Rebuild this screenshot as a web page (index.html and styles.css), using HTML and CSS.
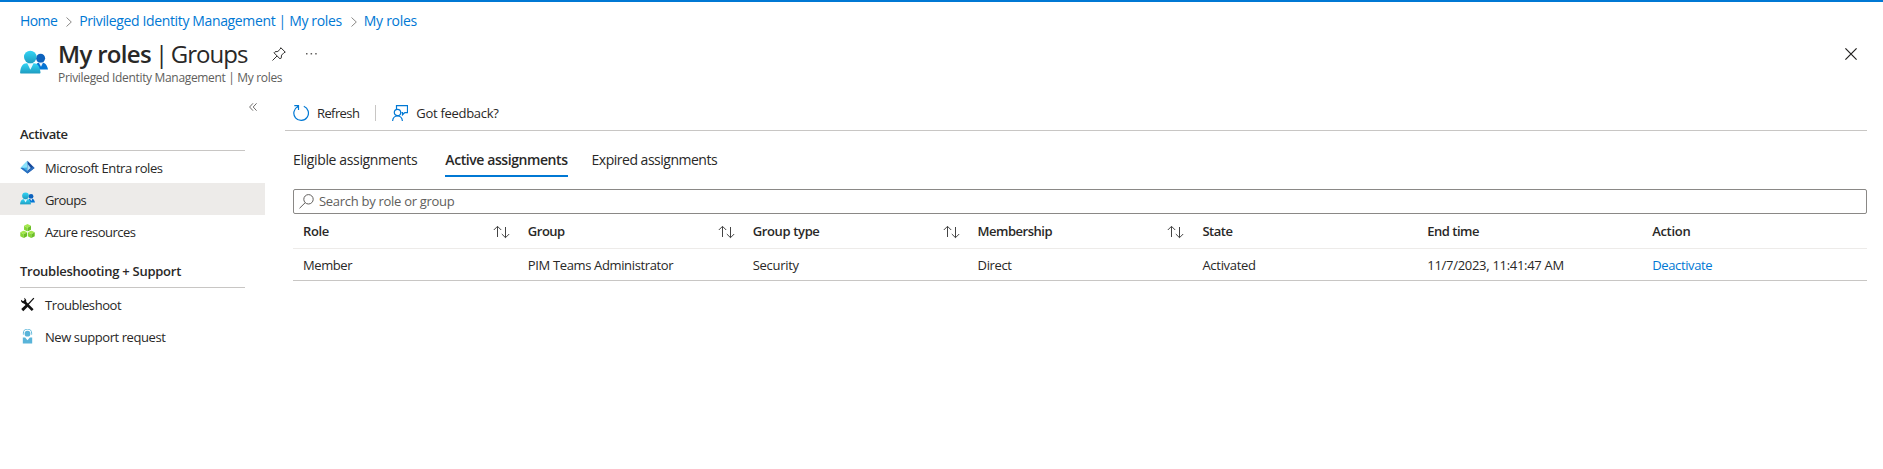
FILE: index.html
```html
<!DOCTYPE html>
<html lang="en">
<head>
<meta charset="utf-8">
<title>My roles | Groups</title>
<link rel="stylesheet" href="styles.css">
</head>
<body>
<svg class="defs" aria-hidden="true">
  <defs>
    <linearGradient id="cyan" x1="0" y1="0" x2="0" y2="1"><stop offset="0" stop-color="#32d4f5"/><stop offset="1" stop-color="#1e9cc0"/></linearGradient>
    <linearGradient id="blue" x1="0" y1="0" x2="0" y2="1"><stop offset="0" stop-color="#0a6fd0"/><stop offset="1" stop-color="#0078d7"/></linearGradient>
    <symbol id="people" viewBox="0 0 28 24">
      <circle cx="20.600" cy="8.200" r="4.500" fill="#0d62bd"/>
      <path d="M15 19.500V17c.6-2.600 2-4.300 4-4.300h3.500c2.700 0 4.600 2.600 5.500 6.800z" fill="url(#blue)"/>
      <path d="M18.800 12.700h4.200l-2 4z" fill="#fff" opacity=".9"/>
      <path d="M1.200 23.500C.4 23.500 0 23 .1 22.200.8 16.500 3 13.300 6.500 13.300h7.400c3.600 0 5.900 3.200 6.600 8.900.1.8-.3 1.300-1.100 1.300z" fill="url(#cyan)"/>
      <path d="M7.200 13.300h6.400l-3.200 6.500z" fill="#fff" opacity=".9"/>
      <circle cx="10.300" cy="7" r="6.300" fill="url(#cyan)"/>
    </symbol>
    <symbol id="sort" viewBox="0 0 18 14">
      <path d="M4.500 12V1.500M.8 5l3.700-3.700L8.200 5M12.500 2v10.700M8.800 9l3.700 3.700L16.200 9" fill="none" stroke="#444" stroke-width="1"/>
    </symbol>
    <symbol id="chev" viewBox="0 0 6 10"><path d="M.5.5 5.300 5 .5 9.500" fill="none" stroke="#8a8886"/></symbol>
    <symbol id="cube" viewBox="0 0 8 8">
      <path d="M4 0 7.700 1.900 4 3.900.3 1.900z" fill="#a4e84c"/><path d="M.3 1.900 4 3.900V8L.3 6.100z" fill="#86d633"/><path d="M7.700 1.900 4 3.900V8l3.700-1.900z" fill="#6bbd25"/>
    </symbol>
  </defs>
</svg>
<div class="page">
  <nav class="breadcrumb">
    <a class="t6">Home</a><svg class="chev"><use href="#chev"/></svg>
    <a>Privileged Identity Management | My roles</a><svg class="chev"><use href="#chev"/></svg>
    <a class="t3">My roles</a>
  </nav>
  <header class="head">
    <svg class="head-icon"><use href="#people"/></svg>
    <div class="titles">
      <div class="title-row">
        <h1><b>My roles</b><span class="pipe">|</span><span class="section">Groups</span></h1>
        <svg class="pin" viewBox="0 0 14 14"><path d="M8.800.7 13.300 5.200 12 5.700 9.600 8.100 9.200 11 8.200 12 2 5.800 3 4.800l2.900-.4L8.300 2zM5 9 .5 13.500" fill="none" stroke="#323130"/></svg>
        <svg class="dots" viewBox="0 0 11 2"><path d="M0 0h1.500v1.500H0zM4.600 0h1.500v1.500H4.600zM9.200 0h1.500v1.500H9.200z" fill="#605e5c"/></svg>
      </div>
      <div class="subtitle">Privileged Identity Management | My roles</div>
    </div>
    <svg class="close" viewBox="0 0 12 12"><path d="M.4.4l11.200 11.200M11.600.4.4 11.600" stroke="#201f1e" stroke-width="1.200"/></svg>
  </header>
  <div class="body">
    <aside class="side">
      <div class="collapse"><svg viewBox="0 0 8 8"><path d="M4 .3.600 4 4 7.700M7.600.3 4.200 4l3.400 3.700" fill="none" stroke="#605e5c" stroke-width=".9"/></svg></div>
      <h2 class="t4">Activate</h2>
      <a class="item"><svg viewBox="0 0 16 16"><path d="M8 .8.5 8.600 8 14.500z" fill="#3cb4ea"/><path d="M8 .8.5 8.600 8 8z" fill="#8be3fb"/><path d="M8 .8l7.500 7.800L8 14.500z" fill="#164a9c"/><path d="M8 4l3.500 4.500L8 11.500z" fill="#a9dcf5"/><path d="M.5 8.600 8 14.500l7.500-5.900L14 7.200 8 12 3 8.300z" fill="#2c6fc0"/></svg><span class="t4">Microsoft Entra roles</span></a>
      <a class="item on"><svg viewBox="0 0 28 28"><use href="#people" width="28" height="24"/></svg><span class="t6">Groups</span></a>
      <a class="item"><svg viewBox="0 0 16 16"><use href="#cube" x="4" y="0" width="8" height="8"/><use href="#cube" x="0" y="7" width="8" height="8"/><use href="#cube" x="8" y="7" width="8" height="8"/></svg><span class="t5">Azure resources</span></a>
      <h2 class="second">Troubleshooting + Support</h2>
      <a class="item"><svg viewBox="0 0 16 16"><path d="M4 4.500 13.500 14" stroke="#111" stroke-width="2.800"/><path d="M1 2.800A3.600 3.600 0 0 0 5.800 6.600 3.600 3.600 0 0 0 4.300.8L5 3.300 3.300 4.500z" fill="#111"/><path d="M14.800 1.200 8 8.500" stroke="#111" stroke-width="1.300"/><path d="M7.500 9 2.400 14" stroke="#111" stroke-width="3"/></svg><span class="t4">Troubleshoot</span></a>
      <a class="item"><svg viewBox="0 0 16 16"><circle cx="8" cy="5" r="3.100" fill="#59b4d9"/><path d="M3.600 6V4.500a4.400 4.400 0 0 1 8.800 0V6" fill="none" stroke="#59b4d9"/><path d="M3 9h2.500L8 12l2.500-3H13v6.500H3z" fill="#59b4d9"/></svg><span class="t4">New support request</span></a>
    </aside>
    <main class="main">
      <div class="toolbar">
        <svg class="ti" viewBox="0 0 16 16"><path d="M10.800 1.300A7.300 7.300 0 1 1 5 1.500M1.300.7H5.500V5" fill="none" stroke="#0078d4" stroke-width="1.200"/></svg>
        <span class="t6">Refresh</span><i class="sep"></i>
        <svg class="ti" viewBox="0 0 16 16"><path d="M4.500 4V.6h11v7h-2.700l-2.300 2.200V7.600H9.500M.6 16c.3-3.200 2-5 4.900-5s4.600 1.800 4.900 5" fill="none" stroke="#0078d4" stroke-width="1.200"/><circle cx="5.500" cy="7.500" r="3.200" fill="none" stroke="#0078d4" stroke-width="1.200"/></svg>
        <span class="t3">Got feedback?</span>
      </div>
      <div class="tabs"><a>Eligible assignments</a><a class="on t4">Active assignments</a><a class="t5">Expired assignments</a></div>
      <div class="search"><svg viewBox="0 0 15 15"><circle cx="9.500" cy="5.300" r="4.700" fill="none" stroke="#605e5c"/><path d="M6.200 8.700.5 14.300" stroke="#605e5c"/></svg><span class="t3">Search by role or group</span></div>
      <div class="row th">
        <div>Role<svg><use href="#sort"/></svg></div>
        <div class="t5">Group<svg><use href="#sort"/></svg></div>
        <div>Group type<svg><use href="#sort"/></svg></div>
        <div class="t5">Membership<svg><use href="#sort"/></svg></div>
        <div class="t5">State</div><div class="t5">End time</div><div class="t3">Action</div>
      </div>
      <div class="row td">
        <div class="t4">Member</div><div>PIM Teams Administrator</div><div class="t3">Security</div><div>Direct</div><div class="t3">Activated</div><div class="t3">11/7/2023, 11:41:47 AM</div><div><a>Deactivate</a></div>
      </div>
    </main>
  </div>
</div>
</body>
</html>
```
FILE: styles.css
```css
* { box-sizing: border-box; }
body { margin: 0; background: #fff; color: #292827; font: 13px/18px "Open Sans", "Noto Sans", sans-serif; letter-spacing: -.36px; }
svg { display: block; flex: none; }
.defs { position: absolute; width: 0; height: 0; }

/* Tracking steps */
.t3 { letter-spacing: -.29px; }
.t4 { letter-spacing: -.42px; }
.t5 { letter-spacing: -.49px; }
.t6 { letter-spacing: -.6px; }

.page { height: 469px; border-top: 2px solid #0078d4; overflow: hidden; }
.breadcrumb { display: flex; align-items: center; height: 36px; padding: 1px 0 0 20px; font-size: 14px; color: #0078d4; }
.chev { width: 6px; height: 10px; margin: 2px 7px 0 9px; }
.head { display: flex; height: 60px; padding-left: 20px; }
.head-icon { width: 28px; height: 24px; margin-top: 12px; }
.titles { margin-left: 10px; }
.title-row { display: flex; height: 32px; align-items: center; }
h1 { display: flex; width: 189px; margin: 0; font-size: 24px; font-weight: 400; line-height: 32px; white-space: nowrap; }
h1 b { letter-spacing: -.68px; }
.pipe { margin: 0 3px 0 4px; }
.section { letter-spacing: -1px; }
h1 b, h2, .th, .tabs .on { font-weight: 600; }
.pin { width: 14px; height: 14px; margin-left: 25px; }
.dots { width: 11px; height: 2px; margin-left: 20px; }
.subtitle { font-size: 12px; line-height: 16px; color: #605e5c; letter-spacing: -.33px; }
.close { width: 12px; height: 12px; margin: 10px 26px 0 auto; }

.body { display: flex; }
.side { width: 265px; }
.collapse { height: 27px; padding: 5px 8px 0 249px; }
.collapse svg { width: 8px; height: 8px; }
h2 { height: 26px; margin: 0 20px; border-bottom: 1px solid #c8c6c4; font-size: 13px; line-height: 18px; }
.second { margin-top: 15px; letter-spacing: -.26px; }
.item { display: flex; align-items: center; height: 32px; padding-left: 20px; gap: 10px; }
.item svg { width: 15px; height: 15px; }
.item span { padding-top: 2px; }
.item.on { background: #edebe9; }

.main { flex: 1; margin: 0 16px 0 20px; }
.toolbar { display: flex; align-items: center; height: 33px; padding: 0 0 2px 8px; border-bottom: 1px solid #c8c6c4; }
.ti { width: 16px; height: 16px; margin-right: 8px; }
.sep { width: 1px; height: 16px; margin: 0 16px; background: #c8c6c4; }
.tabs { display: flex; height: 46px; padding-left: 8px; font-size: 14px; }
.tabs a { padding-top: 20px; }
.tabs .on { margin: 0 24px 0 28px; border-bottom: 2px solid #0078d4; }
.search { display: flex; align-items: center; gap: 5px; height: 25px; margin: 12px 0 0 8px; padding: 0 0 1px 5px; border: 1px solid #8a8886; border-radius: 2px; color: #605e5c; }
.search svg { width: 15px; height: 15px; }
.row { display: grid; grid-template-columns: repeat(7, 1fr); margin-left: 8px; align-items: center; }
.row div { display: flex; padding-left: 10px; }
.row svg { width: 18px; height: 14px; margin: 3px 7px 0 auto; }
.th { height: 35px; border-bottom: 1px solid #edebe9; }
.td { height: 32px; border-bottom: 1px solid #c8c6c4; }
.td a { color: #0078d4; }
```
